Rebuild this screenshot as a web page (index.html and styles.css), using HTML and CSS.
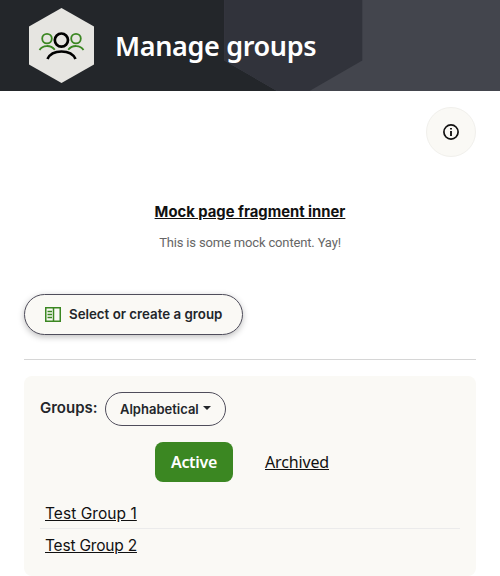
FILE: index.html
```html
<!DOCTYPE html>
<html lang="en">
<head>
<meta charset="utf-8">
<title>Manage groups</title>
<link rel="stylesheet" href="styles.css">
</head>
<body>
<header class="banner">
  <svg class="banner-art" width="500" height="91" viewBox="0 0 500 91" aria-hidden="true">
    <path fill="#43454d" d="M224 0H500V91H224z"/>
    <path fill="#23262a" d="M0 0H224.200V60.500L277 91H0z"/>
    <path fill="#31333b" d="M224.200 0H362.300V60.500L309.500 91H277L224.200 60.500z"/>
  </svg>
  <svg class="hex" width="65" height="75" viewBox="29 8 65 75" aria-hidden="true">
    <path fill="#e6e5e1" d="M61.500 8L94 26.500V64.500L61.500 83L29 64.500V26.500z"/>
    <g fill="none" stroke="#3b8722" stroke-width="1.800">
      <circle cx="47" cy="38.600" r="4.800"/>
      <circle cx="76" cy="38.600" r="4.800"/>
      <path d="M39.500 50C42.500 45 50.500 44.500 54.800 49.700M83.500 50C80.500 45 72.500 44.500 68.200 49.700"/>
    </g>
    <g fill="none" stroke="#000" stroke-width="2.700">
      <circle cx="61.400" cy="40.100" r="6.600"/>
      <path d="M47.500 59C52 49 71 49 75.500 59"/>
    </g>
  </svg>
  <h1 class="title">Manage groups</h1>
</header>
<main class="page">
  <button class="info" aria-label="Information">
    <svg width="16" height="16" viewBox="0 0 16 16">
      <circle cx="8" cy="8" r="7.100" fill="none" stroke="#111" stroke-width="1.700"/>
      <path fill="#222" d="M7 7h2v5H7zM7 4h2v1.500H7z"/>
    </svg>
  </button>
  <section class="fragment">
    <h2 class="fragment-title"><span>Mock page fragment inner</span></h2>
    <p class="fragment-text"><span>This is some mock content. Yay!</span></p>
  </section>
  <button class="select">
    <svg width="16" height="15" viewBox="0 0 16 15">
      <path fill="none" stroke="#3b8722" stroke-width="1.500" d="M.75.75h14.500v13.500H.75zM8.500 1v13M2.500 4.500H7M2.500 7.500H7M2.500 10.500H7"/>
    </svg>
    <span>Select or create a group</span>
  </button>
  <hr class="rule">
  <section class="panel">
    <div class="filter">
      <span class="label">Groups:</span>
      <button class="sort"><span>Alphabetical</span><i class="caret"></i></button>
    </div>
    <nav class="tabs">
      <a class="tab active"><span>Active</span></a>
      <a class="tab archived"><span>Archived</span></a>
    </nav>
    <ul class="list">
      <li><a>Test Group 1</a></li>
      <li><a>Test Group 2</a></li>
    </ul>
  </section>
</main>
</body>
</html>
```

FILE: styles.css
```css
* { box-sizing: border-box; }
body { margin: 0; background: #fff; color: #23262a; font-family: "Inter", "Liberation Sans", sans-serif; }
h1, h2, p, ul { margin: 0; padding: 0; }
button { font: inherit; color: inherit; padding: 0; }
.banner { position: relative; display: flex; align-items: center; gap: 21px; height: 91px; padding-left: 29px; background: #23262a; overflow: hidden; }
.banner-art { position: absolute; inset: 0; }
.hex { position: relative; }
.title { position: relative; color: #fff; font: 600 27px/36px "Noto Sans", sans-serif; letter-spacing: -.35px; }
.page { display: flex; flex-direction: column; padding: 16px 24px 0; }
.info { display: flex; align-items: center; justify-content: center; align-self: flex-end; width: 50px; height: 50px; border: 1px solid #f1f0ec; border-radius: 50%; background: #faf9f5; }
.fragment { margin-top: 43px; text-align: center; }
.fragment-title { color: #111; font-size: 14.800px; font-weight: 700; line-height: 24px; text-decoration: underline; }
.fragment-text { margin-top: 9px; color: #666; font: 13px/20px "Roboto", sans-serif; letter-spacing: -.16px; }
.select { display: flex; align-items: center; gap: 8px; width: 219px; height: 41px; margin-top: 41px; padding-left: 20px; border: 1px solid #4f4d5b; border-radius: 21px; background: #faf9f5; box-shadow: 0 2px 6px rgba(0, 0, 0, .25); font-size: 13.300px; font-weight: 600; line-height: 18px; white-space: nowrap; }
.select span { margin-top: -1px; }
.rule { width: 100%; height: 1px; margin: 24px 0 16px; border: 0; background: #d6d6d6; }
.panel { height: 200px; padding: 16px 16px 0; border-radius: 8px; background: #faf9f5; }
.filter { display: flex; align-items: center; height: 34px; }
.label { width: 65px; margin-top: -3px; font-size: 15px; font-weight: 600; white-space: nowrap; }
.sort { display: flex; align-items: center; gap: 4px; width: 121px; height: 34px; padding-left: 14px; border: 1px solid #4f4d5b; border-radius: 17px; background: #faf9f5; font-size: 13px; font-weight: 600; }
.caret { margin-top: -2px; border: 4px solid transparent; border-top-color: #23262a; border-bottom: 0; }
.tabs { display: flex; justify-content: center; gap: 16px; margin-top: 16px; font: 16px/40px "Noto Sans", sans-serif; }
.tab { height: 40px; white-space: nowrap; }
.active { width: 78px; border-radius: 8px; background: #3b8722; color: #fff; font-weight: 600; letter-spacing: -.3px; text-align: center; }
.archived { width: 96px; padding-left: 16px; color: #111; letter-spacing: -.15px; text-decoration: underline; }
.list { margin-top: 15px; list-style: none; }
.list li { height: 32px; padding-left: 5px; color: #111; font-size: 15.500px; line-height: 33px; letter-spacing: .05px; border-bottom: 1px solid #ebebeb; }
.list li:last-child { letter-spacing: -.2px; border-bottom: 0; }
.list a { text-decoration: underline; }
```
